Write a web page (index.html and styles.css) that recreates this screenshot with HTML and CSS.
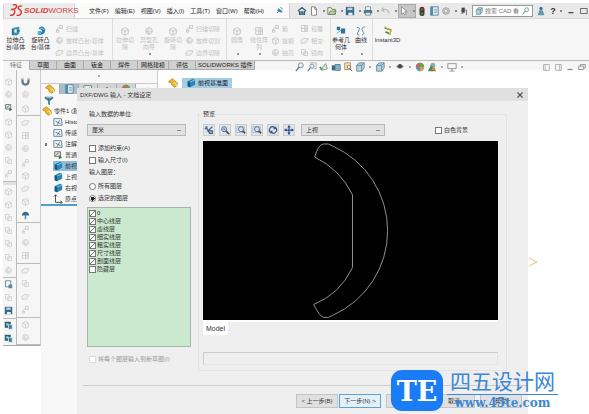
FILE: index.html
```html
<!DOCTYPE html>
<html lang="zh-CN">
<head>
<meta charset="utf-8">
<title>SOLIDWORKS</title>
<link rel="stylesheet" href="styles.css">
</head>
<body>
<svg class="defs" aria-hidden="true">
  <symbol id="cube" viewBox="0 0 12 12"><path d="M2 4l5-2 3 2v5l-4 2-4-2zM2 4l4 2 4-2M6 6v5" fill="#f3f3f3" stroke="currentColor"/></symbol>
  <symbol id="copy" viewBox="0 0 12 12"><path d="M2 2h5v6H2zM5 5h5v5H5z" fill="none" stroke="currentColor"/></symbol>
  <symbol id="orb" viewBox="0 0 12 12"><circle cx="6" cy="6" r="4" fill="#efefef" stroke="currentColor"/><path d="M2 6q4 3 8 0M6 2q-3 4 0 8" fill="none" stroke="currentColor"/></symbol>
  <symbol id="sweep" viewBox="0 0 12 12"><path d="M2 10q1-6 5-5M6 2h4v4H6zM2 8h3v3H2z" fill="#eee" stroke="currentColor"/></symbol>
  <symbol id="slab" viewBox="0 0 12 12"><path d="M1 6l4-3 6 1-3 5-6 1z" fill="#eee" stroke="currentColor"/></symbol>
  <symbol id="grid" viewBox="0 0 12 12"><path d="M2 2h8v8H2zM2 6h8M6 2v8M8 2v8" fill="none" stroke="currentColor"/></symbol>
  <symbol id="plane" viewBox="0 0 12 12"><path d="M2 4l6-3 3 1v6l-6 3-3-1z" fill="#2e86b4"/><path d="M2 4l3 1v6l-3-1z" fill="#145a86"/><path d="M5 5l6-3" stroke="#8fd0ec"/></symbol>
  <symbol id="part" viewBox="0 0 12 12"><path d="M1 4l4-3 3 2 3 3v3l-3 2-3-2-1-3-3-1z" fill="#e6b935" stroke="#b48a21"/><path d="M7 6l3 1v3" stroke="#fff0a8" fill="none"/></symbol>
  <symbol id="extrude" viewBox="0 0 12 12"><path d="M1 3h6v8H1z" fill="#256f96"/><path d="M3 2l7-1v8l-3 2H3z" fill="#3d91b7"/><path d="M4 4h3v4H4z" fill="#d6eef6"/><path d="M7 6h4" stroke="#0c5277"/></symbol>
  <symbol id="revolve" viewBox="0 0 12 12"><path d="M3 3q3-4 7-1 3 5-2 8-5 2-6-1 5 0 5-4z" fill="#247fa8"/><path d="M2 6h4v4H2z" fill="#5bb4d4"/><path d="M5 3q3-2 5 2" stroke="#9fd9ec" fill="none"/></symbol>
  <symbol id="home" viewBox="0 0 12 12"><path d="M1 6l5-4 5 4M3 6v4h2V7h2v3h2V6" fill="none" stroke="#385f76" stroke-width="1.5"/></symbol>
  <symbol id="page" viewBox="0 0 12 12"><path d="M3 1h4l2 2v8H3zM7 1v3h2" fill="#fff" stroke="#777"/></symbol>
  <symbol id="open" viewBox="0 0 12 12"><path d="M1 2h4l1 2h4v6H1z" fill="#f4f0d3" stroke="#687667"/><path d="M4 6h7l-2 4H2z" fill="#c5d7a7" stroke="#667b54"/></symbol>
  <symbol id="save" viewBox="0 0 12 12"><path d="M1 1h10v10H1z" fill="#356c8c"/><path d="M3 2h6v3H3z" fill="#b9d5e2"/><path d="M4 8h5v3H4z" fill="#eee"/></symbol>
  <symbol id="print" viewBox="0 0 12 12"><path d="M3 1h6v4H3z" fill="#fff" stroke="#6f8795"/><path d="M1 5h10v4H1z" fill="#41748f"/><path d="M3 8h6v3H3z" fill="#eef" stroke="#6f8795"/></symbol>
  <symbol id="undo" viewBox="0 0 12 12"><path d="M3 2L1 5l3 2M1 5q7-3 9 4" fill="none" stroke="#bbb" stroke-width="1.5"/></symbol>
  <symbol id="cursor" viewBox="0 0 12 12"><path d="M3 1v9l2-2 2 3 1-1-1-3h3z" fill="#fff" stroke="#888"/></symbol>
  <symbol id="light" viewBox="0 0 12 12"><rect x="3" y="1" width="6" height="11" rx="3" fill="#3a3a32"/><circle cx="6" cy="4" r="1.5" fill="#c33"/><circle cx="6" cy="9" r="1.5" fill="#3a8a42"/></symbol>
  <symbol id="props" viewBox="0 0 12 12"><path d="M2 1h9v10H2z" fill="#f4f8fa" stroke="#437790"/><path d="M2 1h3v10H2z" fill="#4f90ac"/><path d="M6 4h4M6 6h4M6 8h4" stroke="#6b9db1"/></symbol>
  <symbol id="gear" viewBox="0 0 12 12"><circle cx="6" cy="6" r="4" fill="#ccc" stroke="#999"/><circle cx="6" cy="6" r="2" fill="#e8e8e8" stroke="#aaa"/></symbol>
  <symbol id="flag" viewBox="0 0 12 12"><path d="M3 2h4v6H3z" fill="#444"/><path d="M6 5h3v6M3 9h2" stroke="#666" fill="none"/></symbol>
  <symbol id="person" viewBox="0 0 12 12"><circle cx="6" cy="3" r="2" fill="#41718c"/><path d="M4 5h4l2 6H2z" fill="#6497b0"/></symbol>
  <symbol id="zoom" viewBox="0 0 12 12"><circle cx="7" cy="4" r="3" fill="#e6f1f5" stroke="#6b8795"/><path d="M5 6l-4 5" stroke="#6b7b85" stroke-width="1.5"/></symbol>
  <symbol id="zoombox" viewBox="0 0 12 12"><path d="M3 1h8v7H8" stroke="#aaa" fill="none"/><circle cx="6" cy="5" r="2.5" fill="#e6f1f5" stroke="#6b8795"/><path d="M4 7l-3 4" stroke="#6b7b85" stroke-width="1.5"/></symbol>
  <symbol id="back" viewBox="0 0 12 12"><path d="M2 9l6-7 2 6-6 2z" fill="#d6e6d5" stroke="#6f9080"/><path d="M1 6l3 3" stroke="#4a8d59" stroke-width="2"/></symbol>
  <symbol id="section" viewBox="0 0 12 12"><path d="M1 4h4v6H1z" fill="#356b80"/><path d="M5 3h6v7H5z" fill="#86b4c6" stroke="#47788e"/></symbol>
  <symbol id="find" viewBox="0 0 12 12"><path d="M2 1h7v8H2z" fill="#f4deb0" stroke="#b58d53"/><circle cx="7" cy="6" r="2" fill="#fff" stroke="#777"/><path d="M8 8l3 3" stroke="#666"/></symbol>
  <symbol id="viewcube" viewBox="0 0 12 12"><path d="M2 4l3-3h6v6l-3 4H2z" fill="#b4d4e1" stroke="#5a8396"/><path d="M2 4h6l3-3M8 4v7" stroke="#5a8396" fill="none"/></symbol>
  <symbol id="eye" viewBox="0 0 12 12"><path d="M1 5q5-4 10 0-5 6-10 0" fill="#999"/><circle cx="6" cy="5" r="2.5" fill="#444"/></symbol>
  <symbol id="ball" viewBox="0 0 12 12"><circle cx="6" cy="6" r="5" fill="#5d98ab"/><path d="M6 6V1a5 5 0 0 1 5 5z" fill="#69a34b"/><path d="M6 6h5a5 5 0 0 1-5 5z" fill="#d9a14e"/><path d="M6 6H1a5 5 0 0 1 5-5z" fill="#c46a5c"/></symbol>
  <symbol id="scene" viewBox="0 0 12 12"><circle cx="7" cy="4" r="3" fill="#7db0bc"/><path d="M1 11l4-7 3 3 3 4z" fill="#5b8052"/><circle cx="8" cy="8" r="2" fill="#c98e4d"/></symbol>
  <symbol id="monitor" viewBox="0 0 12 12"><path d="M1 2h10v6H1zM6 8v3M3 11h6" fill="none" stroke="#888"/></symbol>
  <symbol id="clip" viewBox="0 0 12 12"><path d="M2 2v4q0 4 4 4t4-5V2" fill="none" stroke="#637984" stroke-width="3"/><path d="M1 3h3M8 3h3" stroke="#d7e0e4"/></symbol>
  <symbol id="filter" viewBox="0 0 12 12"><path d="M1 1h10v2L7 6v5l-2-1V6L1 3z" fill="#3c7891"/><path d="M3 2h6" stroke="#bcdce6"/></symbol>
  <symbol id="mush" viewBox="0 0 12 12"><path d="M1 6q1-5 5-5t5 5z" fill="#376c89"/><path d="M6 5v6" stroke="#5a8aa0" stroke-width="2"/></symbol>
  <symbol id="book" viewBox="0 0 12 12"><path d="M1 2h9l1 8H1z" fill="#f4f7f8" stroke="#567382"/><path d="M3 5l6 3M8 4L5 9" stroke="#456a7d"/></symbol>
  <symbol id="bluedoc" viewBox="0 0 12 12"><path d="M2 1h7v8H2z" fill="#f6fafb" stroke="#4c7080"/><path d="M6 6h5v5H6z" fill="#568ba2"/></symbol>
  <symbol id="bluebox" viewBox="0 0 12 12"><path d="M1 1h8v8H1z" fill="#395d70"/><path d="M3 3h3v3H3z" fill="#9ed4e7"/><path d="M6 5h5v6H6z" fill="#347da0" stroke="#dfeef4"/></symbol>
  <symbol id="green" viewBox="0 0 12 12"><path d="M2 2h7v6H2z" fill="#ddd" stroke="#666"/><path d="M3 7l4-4" stroke="#555"/><path d="M7 6l4 3-4 2z" fill="#2e8143"/></symbol>
  <symbol id="origin" viewBox="0 0 12 12"><path d="M3 1v9h8M1 3l2-2 2 2M9 8l2 2-2 2" fill="none" stroke="#333"/></symbol>
  <symbol id="magnify" viewBox="0 0 12 12"><circle cx="5" cy="5" r="3" fill="#b9d1ec" stroke="#46669c"/><path d="M7 7l4 4" stroke="#4f4f55" stroke-width="2"/><path d="M4 5h2" stroke="#33507f"/></symbol>
  <symbol id="magframe" viewBox="0 0 12 12"><path d="M1 2h9v7H1z" fill="none" stroke="#aab6c8"/><circle cx="6" cy="5" r="3" fill="#cfe0f3" stroke="#46669c"/><path d="M8 7l3 3" stroke="#4f4f55" stroke-width="2"/></symbol>
  <symbol id="pick" viewBox="0 0 12 12"><path d="M2 2l5 8M1 5l3-3M10 2L5 7h5v3H6" stroke="#3c5c8b" stroke-width="1.5" fill="none"/></symbol>
  <symbol id="rotate" viewBox="0 0 12 12"><path d="M3 9a4 4 0 0 1 3-7l3 2M9 3a4 4 0 0 1-3 7L3 8" fill="none" stroke="#34588c" stroke-width="1.5"/><path d="M9 1v4H6zM3 11V7h3z" fill="#34588c"/></symbol>
  <symbol id="pan" viewBox="0 0 12 12"><path d="M6 1v10M1 6h10" stroke="#2d4b96" stroke-width="1.5"/><path d="M6 0l2 3H4zM6 12l2-3H4zM0 6l3-2v4zM12 6L9 4v4z" fill="#2d4b96"/></symbol>
</svg>

<div class="app">
  <header class="titlebar">
    <a class="brand" href="#" aria-label="SOLIDWORKS">
      <svg viewBox="0 0 16 14"><path d="M4 1q5-1 4 2T2 6q5-1 4 3t-5 3M14 2q-5 0-4 3 4 2 3 5t-5 2" fill="none" stroke="#d8362e" stroke-width="1.5"/></svg>
      <b>SOLID</b><span>WORKS</span>
    </a>
    <nav class="menu">
      <a href="#">文件(F)</a><a href="#">编辑(E)</a><a href="#">视图(V)</a><a href="#">插入(I)</a><a href="#">工具(T)</a><a href="#">窗口(W)</a><a href="#">帮助(H)</a>
      <svg class="pin" viewBox="0 0 8 8"><path d="M1 7l3-3M3 2l4 3-1 1-4-2zM5 0l3 3" stroke="#3f7f9e" fill="#3f7f9e"/></svg>
    </nav>
    <div class="quick">
      <button aria-label="主页"><svg><use href="#home"/></svg></button>
      <button class="drop" aria-label="新建"><svg><use href="#page"/></svg></button>
      <button class="drop" aria-label="打开"><svg><use href="#open"/></svg></button>
      <button class="drop" aria-label="保存"><svg><use href="#save"/></svg></button>
      <button class="drop" aria-label="打印"><svg><use href="#print"/></svg></button>
      <button class="drop" aria-label="撤消"><svg><use href="#undo"/></svg></button>
      <button class="drop pressed" aria-label="选择"><svg><use href="#cursor"/></svg></button>
      <button aria-label="重建"><svg><use href="#light"/></svg></button>
      <button aria-label="文件属性"><svg><use href="#props"/></svg></button>
      <button class="drop" aria-label="选项"><svg><use href="#gear"/></svg></button>
      <button aria-label="标记"><svg><use href="#flag"/></svg></button>
      <label class="search"><svg><use href="#viewcube"/></svg><input type="text" value="搜索 CAD 看" aria-label="搜索"><svg><use href="#zoom"/></svg></label>
      <button aria-label="登录"><svg><use href="#person"/></svg></button>
      <button class="drop help">?</button>
      <button aria-label="最小化"><svg viewBox="0 0 12 12"><path d="M3 8h6" stroke="#444" stroke-width="1.5"/></svg></button>
      <button aria-label="最大化"><svg viewBox="0 0 12 12"><path d="M3 3h8v6H3z" stroke="#555" fill="none"/></svg></button>
    </div>
  </header>

  <div class="ribbon">
    <div class="group">
      <button class="big"><svg><use href="#extrude"/></svg>拉伸凸<br>台/基体</button>
      <button class="big"><svg><use href="#revolve"/></svg>旋转凸<br>台/基体</button>
      <div class="stack wide off"><button><svg><use href="#sweep"/></svg>扫描</button><button><svg><use href="#orb"/></svg>放样凸台/基体</button><button><svg><use href="#slab"/></svg>边界凸台/基体</button></div>
    </div>
    <div class="group off">
      <button class="big"><svg><use href="#cube"/></svg>拉伸切<br>除</button>
      <button class="big more"><svg><use href="#orb"/></svg>异型孔<br>向导</button>
      <button class="big"><svg><use href="#cube"/></svg>旋转切<br>除</button>
      <div class="stack"><button><svg><use href="#sweep"/></svg>扫描切除</button><button><svg><use href="#orb"/></svg>放样切割</button><button><svg><use href="#slab"/></svg>边界切除</button></div>
    </div>
    <div class="group off">
      <button class="big more narrow"><svg><use href="#cube"/></svg>圆角</button>
      <button class="big more"><svg><use href="#grid"/></svg>线性阵<br>列</button>
      <div class="stack tight"><button><svg><use href="#sweep"/></svg>筋</button><button><svg><use href="#cube"/></svg>拔模</button><button><svg><use href="#orb"/></svg>抽壳</button></div>
      <div class="stack tight"><button><svg><use href="#grid"/></svg>包覆</button><button><svg><use href="#slab"/></svg>相交</button><button><svg><use href="#copy"/></svg>镜向</button></div>
    </div>
    <div class="group">
      <button class="big more narrow"><svg viewBox="0 0 12 12"><path d="M1 1h4v4H1zM6 3h5v6H6z" fill="#2e7196"/><path d="M1 9l5-4" stroke="#4c9fc0"/></svg>参考几<br>何体</button>
      <button class="big more narrow"><svg viewBox="0 0 12 12"><path d="M1 2q5-1 2 4t1 5M11 1q-6 1-3 5t-1 5" fill="none" stroke="#3b7fa0"/></svg>曲线</button>
    </div>
    <div class="group">
      <button class="big instant"><svg viewBox="0 0 12 12"><path d="M2 2l8 3M3 7l6 3" stroke="#3e8c55" stroke-width="2"/><path d="M2 1l8 5-3 4" stroke="#dfae34" stroke-width="1.5" fill="none"/></svg>Instant3D</button>
    </div>
  </div>

  <nav class="tabs">
    <a class="on" href="#">特征</a><a href="#">草图</a><a href="#">曲面</a><a href="#">钣金</a><a href="#">焊件</a><a href="#">网格建模</a><a href="#">评估</a><a href="#">SOLIDWORKS 插件</a>
  </nav>

  <main class="workspace">
    <div class="rail first">
      <div class="set"><svg><use href="#cube"/></svg><svg><use href="#orb"/></svg><svg><use href="#green"/></svg><svg><use href="#cube"/></svg><svg><use href="#cube"/></svg><svg><use href="#orb"/></svg><svg><use href="#copy"/></svg><svg><use href="#sweep"/></svg></div>
      <div class="set"><svg><use href="#cube"/></svg><svg><use href="#cube"/></svg><svg><use href="#copy"/></svg><svg><use href="#copy"/></svg><svg><use href="#copy"/></svg><svg><use href="#copy"/></svg><svg><use href="#orb"/></svg></div>
      <div class="set"><svg><use href="#bluedoc"/></svg><svg><use href="#copy"/></svg><svg><use href="#save"/></svg></div>
      <div class="set"><svg><use href="#bluebox"/></svg><svg><use href="#bluebox"/></svg></div>
    </div>
    <div class="rail second">
      <div class="set"><svg><use href="#clip"/></svg><svg><use href="#orb"/></svg><svg><use href="#cube"/></svg></div>
      <div class="set"><svg><use href="#slab"/></svg><svg><use href="#grid"/></svg><svg><use href="#orb"/></svg><svg><use href="#sweep"/></svg><svg><use href="#cube"/></svg><svg><use href="#slab"/></svg><svg><use href="#cube"/></svg><svg><use href="#mush"/></svg></div>
      <div class="set"><svg><use href="#sweep"/></svg><svg><use href="#orb"/></svg><svg><use href="#grid"/></svg></div>
      <div class="set"><svg><use href="#slab"/></svg><svg><use href="#copy"/></svg><svg><use href="#slab"/></svg><svg><use href="#sweep"/></svg></div>
      <div class="set"><svg><use href="#cube"/></svg><svg><use href="#orb"/></svg></div>
    </div>

    <aside class="feature">
      <div class="grip"></div>
      <div class="ftabs">
        <button class="on" aria-label="特征树"><svg><use href="#part"/></svg></button>
        <button class="blue" aria-label="属性"><svg><use href="#props"/></svg></button>
        <button aria-label="配置"><svg><use href="#book"/></svg></button>
        <button aria-label="尺寸"><svg viewBox="0 0 12 12"><path d="M1 9l5-5 5 5M6 4v7" stroke="#555" fill="none"/></svg></button>
        <button aria-label="外观"><svg><use href="#ball"/></svg></button>
        <span>›</span>
      </div>
      <svg class="funnel"><use href="#filter"/></svg>
      <ul class="tree">
        <li class="root"><svg><use href="#part"/></svg>零件1 (默认)</li>
        <li><svg><use href="#book"/></svg>History</li>
        <li><svg><use href="#book"/></svg>传感器</li>
        <li class="closed"><svg><use href="#book"/></svg>注解</li>
        <li><svg><use href="#green"/></svg>普通碳钢</li>
        <li class="picked"><svg><use href="#plane"/></svg>前视基准面</li>
        <li><svg><use href="#plane"/></svg>上视基准面</li>
        <li><svg><use href="#plane"/></svg>右视基准面</li>
        <li><svg><use href="#origin"/></svg>原点</li>
      </ul>
    </aside>

    <section class="viewport">
      <div class="crumb"><svg><use href="#part"/></svg><span><svg><use href="#plane"/></svg>前视基准面</span></div>
      <div class="hud">
        <svg><use href="#zoom"/></svg><svg><use href="#zoombox"/></svg><svg><use href="#back"/></svg><svg><use href="#section"/></svg><svg><use href="#find"/></svg><svg><use href="#viewcube"/></svg><i></i><svg><use href="#viewcube"/></svg><i></i><svg><use href="#eye"/></svg><i></i><svg><use href="#ball"/></svg><svg><use href="#scene"/></svg><i></i><svg><use href="#monitor"/></svg><i></i>
      </div>
      <div class="wins">
        <svg viewBox="0 0 12 12"><path d="M3 3h7v7H3zM5 3v7" fill="none" stroke="#aaa"/></svg>
        <svg viewBox="0 0 12 12"><path d="M3 3h7v7H3zM8 3v7" fill="none" stroke="#aaa"/></svg>
        <svg viewBox="0 0 12 12"><path d="M3 9h6" stroke="#888" stroke-width="1.5"/></svg>
        <svg viewBox="0 0 12 12"><path d="M2 5h6v4H2zM4 5V3h6v4H8" fill="none" stroke="#888"/></svg>
      </div>
      <svg class="marker" viewBox="0 0 10 10"><path d="M0 1l8 4-8 4" fill="none" stroke="#f0bd80"/></svg>
    </section>
  </main>

  <form class="dialog" role="dialog" aria-labelledby="dlg">
    <div class="caption"><h1 id="dlg">DXF/DWG 输入 - 文档设定</h1><button type="button" aria-label="关闭"><svg viewBox="0 0 8 8"><path d="M2 2l4 4M6 2L2 6" stroke="#555"/></svg></button></div>
    <div class="content">
      <div class="options">
        <label class="head" for="unit">输入数据的单位:</label>
        <select id="unit"><option>厘米</option></select>
        <div class="checks">
          <label><input type="checkbox">添加约束(A)</label>
          <label><input type="checkbox">输入尺寸(I)</label>
        </div>
        <p class="head">输入图层：</p>
        <div class="checks radios">
          <label><input type="radio" name="layers">所有图层</label>
          <label><input type="radio" name="layers" checked>选定的图层</label>
        </div>
        <div class="layers">
          <label><input type="checkbox" checked>0</label>
          <label><input type="checkbox" checked>中心线层</label>
          <label><input type="checkbox" checked>虚线层</label>
          <label><input type="checkbox" checked>细实线层</label>
          <label><input type="checkbox" checked>粗实线层</label>
          <label><input type="checkbox" checked>尺寸线层</label>
          <label><input type="checkbox" checked>剖面线层</label>
          <label><input type="checkbox">隐藏层</label>
        </div>
        <label class="disabled"><input type="checkbox" disabled>将每个图层输入到新草图(I)</label>
      </div>
      <fieldset class="preview">
        <legend>预览</legend>
        <div class="bar">
          <button type="button" aria-label="选择"><svg><use href="#pick"/></svg></button>
          <button type="button" aria-label="放大"><svg><use href="#magnify"/></svg></button>
          <button type="button" aria-label="整屏"><svg><use href="#magframe"/></svg></button>
          <button type="button" aria-label="局部"><svg><use href="#magframe"/></svg></button>
          <button type="button" aria-label="旋转"><svg><use href="#rotate"/></svg></button>
          <button type="button" aria-label="平移"><svg><use href="#pan"/></svg></button>
          <select aria-label="视图"><option>上视</option></select>
          <label class="white"><input type="checkbox">白色背景</label>
        </div>
        <svg class="canvas" viewBox="0 0 296 180" role="img" aria-label="预览"><path d="M112 16Q116 3 121 3Q126 2 130 5A93 93 0 0 1 130 175Q126 178 121 177Q117 176 111 164Q137 154 150 127V54Q138 29 112 16" fill="none" stroke="#909090"/></svg>
        <div class="sheets"><button type="button">Model</button></div>
        <div class="progress"></div>
      </fieldset>
    </div>
    <footer>
      <button type="button">&lt; 上一步(B)</button><button type="button" class="primary">下一步(N) &gt;</button>
      <button type="button" class="apart" aria-label="完成"></button><button type="button" class="apart">取消</button><button type="button" class="apart">帮助</button>
    </footer>
  </form>

  <div class="watermark">
    <div class="te">TE</div>
    <div class="site"><strong>四五设计网</strong><span>www.45te.com</span></div>
  </div>
</div>
</body>
</html>
```
FILE: styles.css
```css
* { box-sizing: border-box; }
body {
  margin: 0;
  background: #fff;
  color: #333;
  font: 6px/8px "Liberation Sans", "Noto Sans CJK SC", sans-serif;
}
button, input, select { font: inherit; color: inherit; margin: 0; padding: 0; border: 0; background: none; border-radius: 0; }
button { display: flex; align-items: center; justify-content: center; }
a { color: inherit; text-decoration: none; }
ul, p, h1 { margin: 0; padding: 0; list-style: none; font: inherit; }
svg { display: block; width: 10px; height: 10px; flex: none; }
.defs { position: absolute; width: 0; height: 0; }

.app { position: relative; min-height: 100vh; padding: 3px 0 0 3px; overflow: hidden; display: flex; flex-direction: column; }

.titlebar { display: flex; height: 15px; background: #fafafa; white-space: nowrap; }
.brand { display: flex; align-items: center; width: 72px; height: 16px; padding-left: 5px; background: #ececec; border: 1px solid #d4d4d4; border-top: 0; color: #d8403a; font-size: 8px; }
.brand svg { width: 15px; height: 13px; }
.brand b { font-style: italic; }
.menu { flex: 1; display: flex; align-items: center; gap: 6px; padding-left: 14px; color: #222; }
.pin { width: 7px; height: 7px; margin: 0 auto; }
.quick { display: flex; align-items: center; padding-left: 6px; background: #e9e9e9; border-left: 1px solid #d0d0d0; }
.quick button { width: 12px; height: 14px; }
.quick .drop { width: 18px; }
.drop::after { content: ""; width: 2px; height: 2px; margin-left: 4px; background: #888; }
.quick .pressed { background: #c6c6c6; border: 1px solid #aaa; }
.quick .help { font-size: 9px; font-weight: bold; }
.search { display: flex; align-items: center; width: 61px; height: 12px; margin: 0 2px; padding: 0 2px; background: #fff; border: 1px solid #999; }
.search input { flex: 1; min-width: 0; padding-left: 2px; color: #777; }
.search svg { width: 8px; height: 8px; }

.ribbon { display: flex; height: 42px; background: #f6f6f6; border-top: 1px solid #d8d8d8; }
.group { display: flex; padding: 4px 1px 2px 0; border-right: 1px solid #ddd; }
.group:last-child { border: 0; }
.off { color: #c2c2c2; }
.big { display: block; position: relative; width: 25px; text-align: center; line-height: 7px; white-space: nowrap; align-self: flex-start; padding-top: 3px; }
.big svg { margin: 0 auto 1px; }
.off .big { width: 24px; }
.big.narrow, .off .narrow { width: 20px; }
.big.instant { width: 29px; }
.more::after { content: ""; position: absolute; left: 50%; top: 30px; width: 2px; height: 2px; background: #999; }
.stack { display: flex; flex-direction: column; justify-content: space-between; width: 40px; }
.stack button { justify-content: flex-start; gap: 2px; height: 11px; white-space: nowrap; }
.stack.wide { width: 58px; padding-left: 2px; }
.stack.tight { width: 29px; }
.stack svg { width: 9px; height: 9px; }

.tabs { display: flex; height: 10px; background: #f6f6f6; border-top: 1px solid #bbb; }
.tabs a { display: flex; align-items: center; padding: 0 7px; background: #d0d0d0; border-right: 1px solid #aaa; border-bottom: 1px solid #aaa; color: #222; }
.tabs a:not(:last-child) { min-width: 27px; justify-content: center; }
.tabs a:nth-child(6) { padding: 0 3px; }
.tabs .on { background: #f6f6f6; border-bottom-color: #f6f6f6; color: #777; }
.tabs a:last-child { padding: 0 2px; }

.workspace { flex: 1; display: flex; }
.rail { display: flex; flex-direction: column; align-self: flex-start; height: 276px; padding-top: 5px; background: #f6f6f6; border-bottom: 1px solid #aaa; color: #ccc; }
.first { width: 14px; border-right: 1px solid #bbb; }
.second { width: 24px; border-right: 1px solid #ccc; }
.set { display: flex; flex-direction: column; justify-content: space-around; border-bottom: 1px solid #bbb; padding-left: 1px; }
.set svg { width: 9px; height: 9px; }
.second .set { padding-left: 4px; }
.first .set:nth-child(1) { flex: 8; }
.first .set:nth-child(2) { flex: 7; border-top: 3px solid #e0e0e0; }
.first .set:nth-child(3) { flex: 3; }
.first .set:nth-child(4) { flex: 2; border: 0; }
.second .set:nth-child(1) { flex: 3; }
.second .set:nth-child(2) { flex: 8; }
.second .set:nth-child(3) { flex: 3; }
.second .set:nth-child(4) { flex: 4; }
.second .set:nth-child(5) { flex: 2; }

.feature { width: 117px; background: #f8f8f8; border-right: 1px solid #ccc; white-space: nowrap; }
.grip { width: 2px; height: 2px; margin: 5px auto 6px; background: #aaa; }
.ftabs { display: flex; height: 11px; border-top: 1px solid #ccc; }
.ftabs button { width: 19px; background: #d2d2d2; border-right: 1px solid #aaa; }
.ftabs .on { background: #f8f8f8; }
.ftabs .blue { background: #a9bdca; }
.ftabs span { margin-left: 12px; }
.funnel { margin: 2px 0 0 3px; }
.tree { display: grid; grid-auto-rows: 10px; row-gap: 1px; border-bottom: 2px solid #4fa0c8; }
.tree li { display: flex; align-items: center; gap: 2px; margin-left: 12px; }
.tree .root { margin-left: 1px; }
.tree .picked { background: #8ec0de; }
.tree .closed { position: relative; }
.closed::before { content: ""; position: absolute; left: -8px; width: 2px; height: 3px; background: #777; }

.viewport { position: relative; flex: 1; background: #fff; }
.crumb { display: flex; align-items: center; height: 10px; margin: 8px 0 0 10px; }
.crumb span { display: flex; align-items: center; gap: 2px; width: 50px; height: 10px; margin-left: 4px; padding-left: 4px; background: #a4cde4; color: #123; }
.hud, .wins { position: absolute; top: -8px; display: flex; align-items: center; gap: 2px; }
.hud { left: 137px; }
.hud i { width: 2px; height: 2px; margin: 0 2px; background: #aaa; }
.wins { right: 2px; }
.marker { position: absolute; right: 50px; top: 187px; }

.dialog { position: absolute; top: 88px; left: 77px; right: 61px; background: #efefef; }
.caption { display: flex; justify-content: space-between; align-items: center; height: 13px; padding: 0 3px; background: #e0e0e0; }
.caption button { width: 10px; height: 10px; }
.content { display: flex; gap: 7px; padding: 9px 21px 0 10px; }
.options { width: 104px; display: flex; flex-direction: column; }
.head, legend { padding: 0; line-height: 8px; }
.head { padding-left: 2px; }
select { appearance: none; height: 12px; padding: 0 4px; border: 1px solid #b8b8b8; background: #e2e2e2 linear-gradient(#888, #888) no-repeat right 4px center / 4px 1px; }
#unit { width: 99px; margin: 6px 0 7px; }
.checks { display: grid; gap: 2px; margin-bottom: 3px; }
.checks label, .white, .disabled { display: flex; align-items: center; gap: 2px; height: 10px; padding-left: 2px; }
.radios { margin: 5px 0 4px; }
input[type="checkbox"], input[type="radio"] { appearance: none; width: 7px; height: 7px; background: #fff; border: 1px solid #777; flex: none; }
input[type="radio"] { border-radius: 50%; }
input[type="radio"]:checked { background: radial-gradient(#222 0 2px, #fff 2px); }
input[type="checkbox"]:checked { background: linear-gradient(135deg, #fff 42%, #777 42% 58%, #fff 58%); }
.layers { height: 140px; padding: 1px; background: #cbe9cf; border: 1px solid #a5b5a8; }
.layers label { display: flex; align-items: center; gap: 1px; height: 8px; }
.disabled { margin-top: 7px; color: #999; }
.disabled input { border-color: #ddd; }
.preview { flex: 1; min-width: 0; margin: 0; padding: 6px 8px 5px 4px; border: 1px solid #e3e3e3; }
.bar { display: flex; align-items: center; gap: 4px; }
.bar button { width: 12px; height: 12px; background: #e1e5e9; border: 1px solid #ccc; }
.bar select { width: 84px; margin-left: 2px; }
.white { margin: 0 30px 0 auto; }
.canvas { width: 100%; height: auto; margin-top: 5px; background: #000; }
.sheets { background: linear-gradient(#fff 2px, transparent 2px); }
.sheets button { height: 15px; padding: 2px 3px 0; background: #fff; font-size: 7px; }
.progress { height: 13px; margin-top: 17px; border: 1px solid #ccc; border-right-color: #e6e6e6; border-bottom-color: #e6e6e6; }
footer { display: flex; justify-content: flex-end; gap: 1px; margin: 14px 0 0 6px; padding: 8px 6px 6px 0; border-top: 1px solid #ccc; }
footer button { width: 42px; height: 14px; background: #e0e0e0; border: 1px solid #c4c4c4; white-space: nowrap; }
footer .primary { background: #e3f0fa; border-color: #5ba2d6; }
footer .apart { margin-left: 4px; }

.watermark { position: absolute; right: 31px; bottom: 3px; display: flex; gap: 4px; color: #3c87d6; }
.te { width: 52px; height: 41px; border-radius: 11px; background: #1b7cf7; color: #fff; font: bold 27px/43px "DejaVu Serif", serif; text-align: center; }
.site { width: 111px; text-align: center; }
.site strong { display: block; font: 21px/21px "Noto Sans CJK SC", sans-serif; padding-bottom: 3px; border-bottom: 1px solid #3c87d6; white-space: nowrap; }
.site span { display: block; font: bold 12px/16px "DejaVu Serif", serif; }
```
